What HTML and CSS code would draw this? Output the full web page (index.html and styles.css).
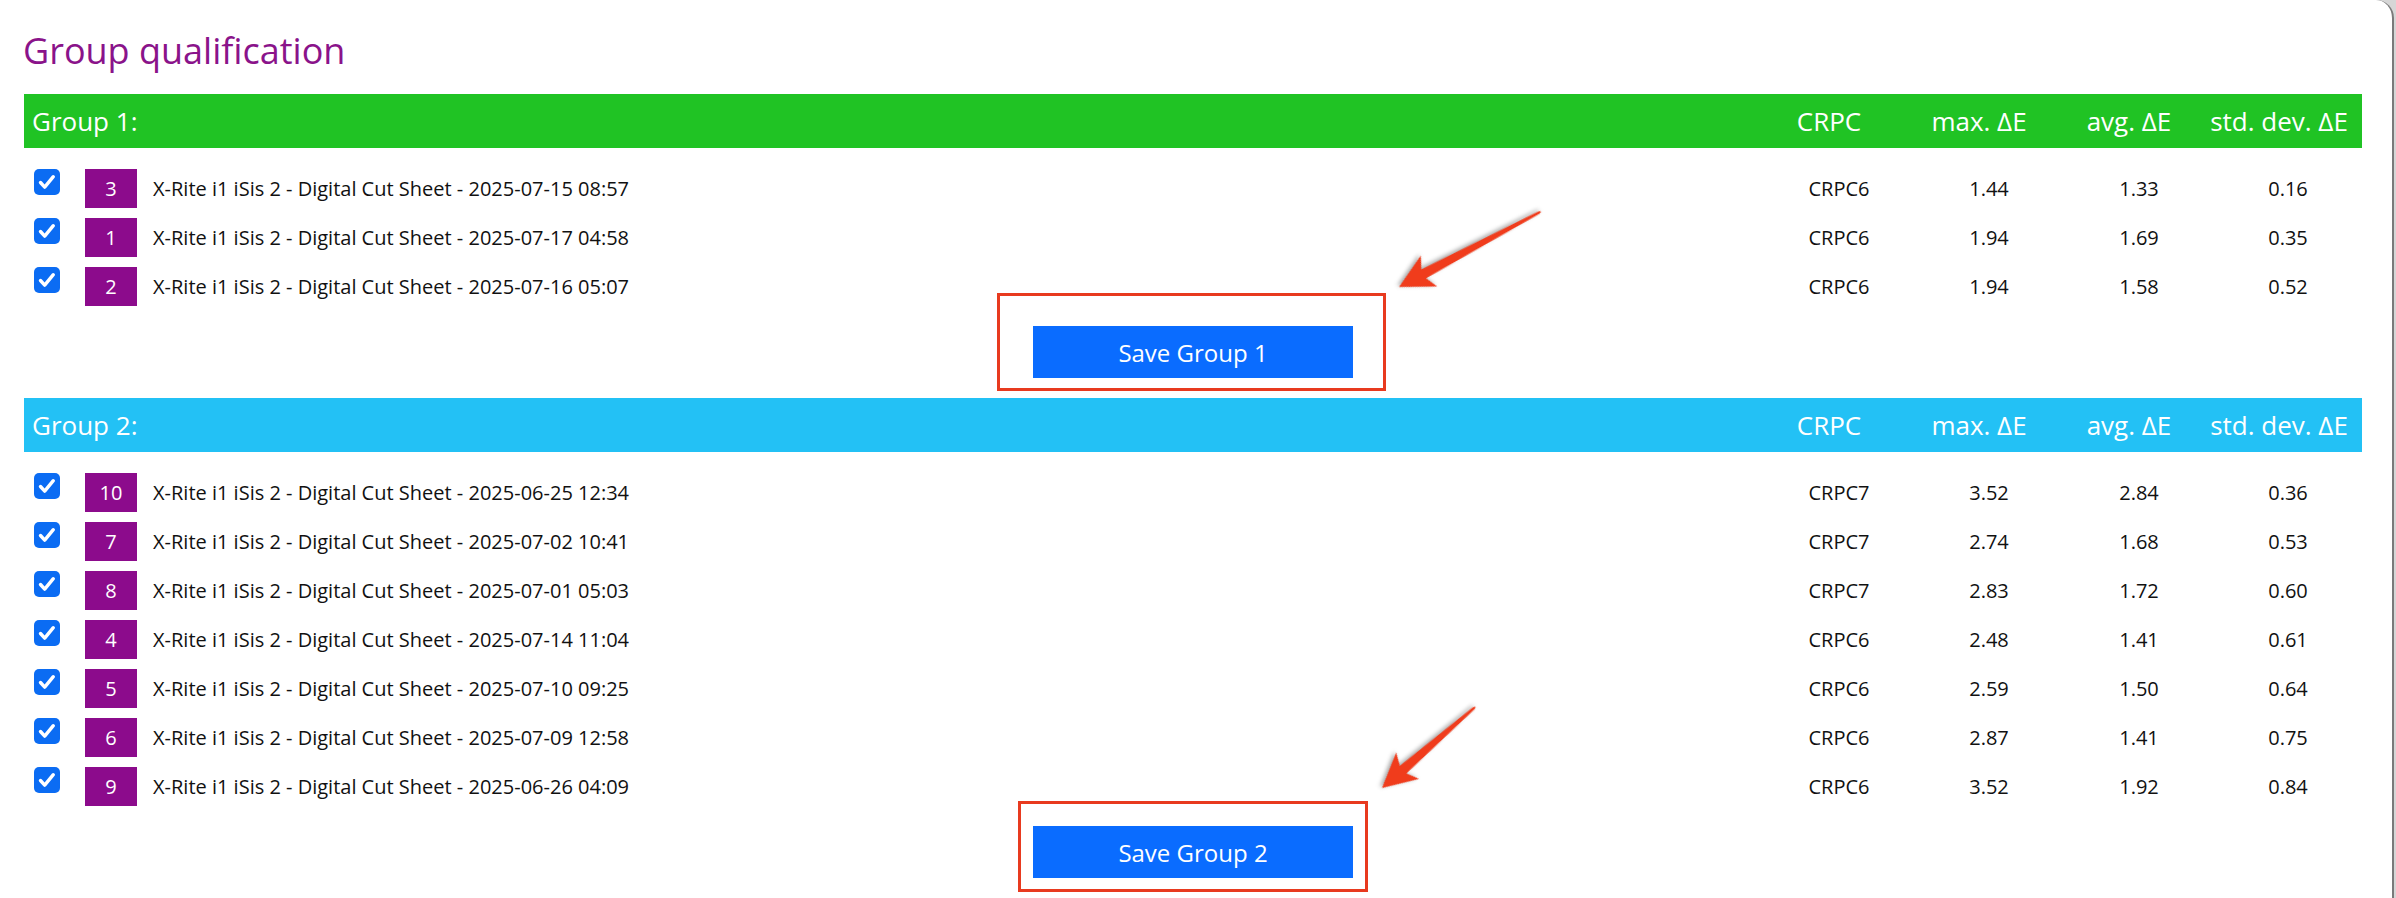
FILE: index.html
```html
<!DOCTYPE html>
<html lang="en">
<head>
    <meta charset="UTF-8">
    <meta name="viewport" content="width=device-width, initial-scale=1.0">
    <title>Group qualification</title>
    <link rel="stylesheet" href="styles.css">
</head>
<body>
    <div class="page">

        <h1>Group qualification</h1>

        <section class="group group1">
            <div class="groupBar">
                <span class="groupName">Group 1:</span>
                <span>CRPC</span>
                <span>max. &Delta;E</span>
                <span>avg. &Delta;E</span>
                <span>std. dev. &Delta;E</span>
            </div>
            <div class="rows">
                <label class="row"><input type="checkbox" checked><span class="badge">3</span><span class="name">X-Rite i1 iSis 2 - Digital Cut Sheet - 2025-07-15 08:57</span><span class="cell">CRPC6</span><span class="cell">1.44</span><span class="cell">1.33</span><span class="cell last">0.16</span></label>
                <label class="row"><input type="checkbox" checked><span class="badge">1</span><span class="name">X-Rite i1 iSis 2 - Digital Cut Sheet - 2025-07-17 04:58</span><span class="cell">CRPC6</span><span class="cell">1.94</span><span class="cell">1.69</span><span class="cell last">0.35</span></label>
                <label class="row"><input type="checkbox" checked><span class="badge">2</span><span class="name">X-Rite i1 iSis 2 - Digital Cut Sheet - 2025-07-16 05:07</span><span class="cell">CRPC6</span><span class="cell">1.94</span><span class="cell">1.58</span><span class="cell last">0.52</span></label>
            </div>
            <div class="actions">
                <button type="button">Save Group 1</button>
            </div>
        </section>

        <section class="group group2">
            <div class="groupBar">
                <span class="groupName">Group 2:</span>
                <span>CRPC</span>
                <span>max. &Delta;E</span>
                <span>avg. &Delta;E</span>
                <span>std. dev. &Delta;E</span>
            </div>
            <div class="rows">
                <label class="row"><input type="checkbox" checked><span class="badge">10</span><span class="name">X-Rite i1 iSis 2 - Digital Cut Sheet - 2025-06-25 12:34</span><span class="cell">CRPC7</span><span class="cell">3.52</span><span class="cell">2.84</span><span class="cell last">0.36</span></label>
                <label class="row"><input type="checkbox" checked><span class="badge">7</span><span class="name">X-Rite i1 iSis 2 - Digital Cut Sheet - 2025-07-02 10:41</span><span class="cell">CRPC7</span><span class="cell">2.74</span><span class="cell">1.68</span><span class="cell last">0.53</span></label>
                <label class="row"><input type="checkbox" checked><span class="badge">8</span><span class="name">X-Rite i1 iSis 2 - Digital Cut Sheet - 2025-07-01 05:03</span><span class="cell">CRPC7</span><span class="cell">2.83</span><span class="cell">1.72</span><span class="cell last">0.60</span></label>
                <label class="row"><input type="checkbox" checked><span class="badge">4</span><span class="name">X-Rite i1 iSis 2 - Digital Cut Sheet - 2025-07-14 11:04</span><span class="cell">CRPC6</span><span class="cell">2.48</span><span class="cell">1.41</span><span class="cell last">0.61</span></label>
                <label class="row"><input type="checkbox" checked><span class="badge">5</span><span class="name">X-Rite i1 iSis 2 - Digital Cut Sheet - 2025-07-10 09:25</span><span class="cell">CRPC6</span><span class="cell">2.59</span><span class="cell">1.50</span><span class="cell last">0.64</span></label>
                <label class="row"><input type="checkbox" checked><span class="badge">6</span><span class="name">X-Rite i1 iSis 2 - Digital Cut Sheet - 2025-07-09 12:58</span><span class="cell">CRPC6</span><span class="cell">2.87</span><span class="cell">1.41</span><span class="cell last">0.75</span></label>
                <label class="row"><input type="checkbox" checked><span class="badge">9</span><span class="name">X-Rite i1 iSis 2 - Digital Cut Sheet - 2025-06-26 04:09</span><span class="cell">CRPC6</span><span class="cell">3.52</span><span class="cell">1.92</span><span class="cell last">0.84</span></label>
            </div>
            <div class="actions">
                <button type="button">Save Group 2</button>
            </div>
        </section>

        <!-- red callouts pointing at the save buttons -->
        <svg class="callouts" width="2396" height="898" viewBox="0 0 2396 898">
            <rect x="998.5" y="294.5" width="386" height="95" />
            <rect x="1019.5" y="802.5" width="347" height="88" />
            <g transform="translate(1399 287) rotate(152)">
                <polygon points="0,0 -34,-17.5 -28,-5 -159,-1.3 -161,0 -159,1.3 -28,5 -34,17.5" />
            </g>
            <g transform="translate(1382 788) rotate(139)">
                <polygon points="0,0 -34,-17.5 -28,-5 -122,-1.3 -124,0 -122,1.3 -28,5 -34,17.5" />
            </g>
        </svg>

    </div>
</body>
</html>
```

FILE: styles.css
```css
* {
    box-sizing: border-box;
}
body {
    margin: 0;
    background-color: #d6d6d6;
    font-family: "Open Sans", "Noto Sans", sans-serif;
    color: #111;
}

.page {
    position: relative;
    min-height: 100vh;
    margin-right: 2px;
    padding: 0 30px 0 24px;
    background-color: #fff;
    border-right: 2px solid #7a7a7a;
    border-top-right-radius: 18px;
    overflow: hidden;
}

h1 {
    margin: 27px 0 19px -1px;
    font-size: 36px;
    line-height: 48px;
    font-weight: 400;
    color: #8a138a;
}

/* coloured header bar of each group */
.groupBar {
    display: flex;
    height: 54px;
    padding: 0 8px;
    font-size: 26px;
    line-height: 54px;
    color: #fff;
}
.groupBar span {
    width: 150px;
    text-align: center;
    white-space: nowrap;
}
.groupBar .groupName {
    flex: 1;
    text-align: left;
}
.group1 .groupBar {
    background-color: #20c324;
}
.group2 .groupBar {
    background-color: #23c1f5;
}

.rows {
    padding-top: 16px;
}

.row {
    display: flex;
    align-items: flex-start;
    height: 49px;
    padding-left: 10px;
    font-size: 20px;
    line-height: 49px;
}

.row input {
    appearance: none;
    -webkit-appearance: none;
    flex: none;
    width: 26px;
    height: 26px;
    margin: 5px 25px 0 0;
    border-radius: 5px;
    background: #0b6cf3 url("data:image/svg+xml,%3Csvg xmlns='http://www.w3.org/2000/svg' viewBox='0 0 26 26'%3E%3Cpath d='M6.5 13.5l4.2 4.6 8.6-10.4' fill='none' stroke='white' stroke-width='3.4' stroke-linecap='round' stroke-linejoin='round'/%3E%3C/svg%3E") center / 26px 26px no-repeat;
}

.badge {
    flex: none;
    width: 52px;
    height: 39px;
    margin: 5px 16px 0 0;
    background-color: #8c0b8c;
    color: #fff;
    line-height: 39px;
    text-align: center;
}

.name {
    flex: 1;
    white-space: nowrap;
}

.cell {
    width: 150px;
    text-align: center;
}
.cell.last {
    width: 148px;
}

.actions {
    padding: 15px 0 20px;
    text-align: center;
}

.actions button {
    width: 320px;
    height: 52px;
    border: none;
    border-radius: 0;
    background-color: #0a6cff;
    color: #fff;
    font-family: inherit;
    font-size: 24px;
}

.callouts {
    position: absolute;
    top: 0;
    left: 0;
    pointer-events: none;
}
.callouts rect {
    fill: none;
    stroke: #e83a1f;
    stroke-width: 3;
}
.callouts polygon {
    fill: #f03c1c;
    filter: drop-shadow(1px 2px 2px rgba(0, 0, 0, 0.35));
}
```
